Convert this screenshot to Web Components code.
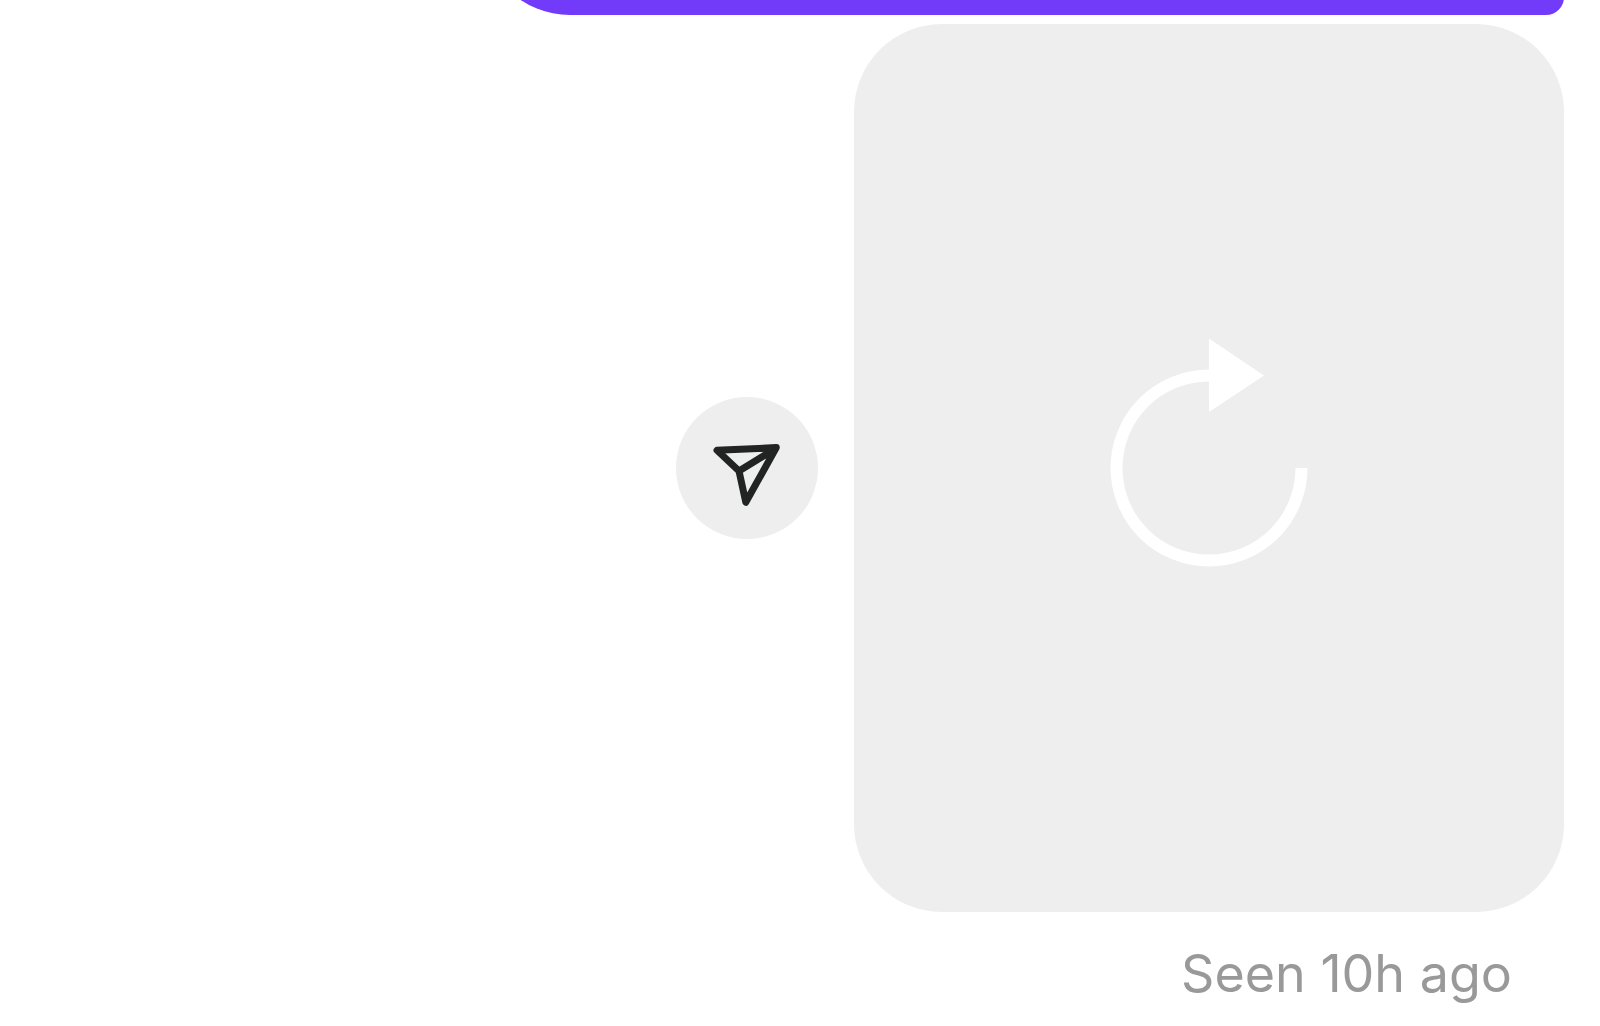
<!DOCTYPE html>
<html lang="en">
<head>
<meta charset="utf-8">
<meta name="viewport" content="width=device-width, initial-scale=1">
<title>Messages</title>
<style>
    body {
        margin: 0;
        background-color: #ffffff;
        color: #999999;
        font-family: Inter, "Liberation Sans", sans-serif;
    }
</style>
</head>
<body>
<chat-thread>
    <chat-bubble slot="previous"></chat-bubble>
    <chat-media>
        <share-button slot="action"></share-button>
    </chat-media>
    <chat-status slot="status">Seen 10h ago</chat-status>
</chat-thread>

<script>
class ChatThread extends HTMLElement {
    constructor() {
        super();
        this.attachShadow({mode: 'open'});
    }

    connectedCallback() {
        this.shadowRoot.innerHTML = `
            <style>
                :host {
                    display: block;
                }

                #main {
                    display: flex;
                    flex-direction: column;
                    padding-right: 36px;
                }

                /* only the tail of the previous message is scrolled into view */
                #previous {
                    display: flex;
                    justify-content: flex-end;
                    align-items: flex-end;
                    height: 15px;
                    margin-bottom: 9px;
                    overflow: hidden;
                }
            </style>
            <div id="main">
                <div id="previous"><slot name="previous"></slot></div>
                <slot></slot>
                <slot name="status"></slot>
            </div>
        `;
    }
}

class ChatBubble extends HTMLElement {
    constructor() {
        super();
        this.attachShadow({mode: 'open'});
    }

    connectedCallback() {
        this.shadowRoot.innerHTML = `
            <style>
                :host {
                    display: block;
                    flex: none;
                    width: 69.2%;
                }

                #main {
                    min-height: 240px;
                    border-radius: 88px 88px 18px 88px;
                    background-color: #713bf9;
                }
            </style>
            <div id="main"><slot></slot></div>
        `;
    }
}

class ChatMedia extends HTMLElement {
    constructor() {
        super();
        this.attachShadow({mode: 'open'});
    }

    connectedCallback() {
        this.shadowRoot.innerHTML = `
            <style>
                :host {
                    display: flex;
                    justify-content: flex-end;
                    align-items: center;
                    gap: 36px;
                }

                button {
                    display: flex;
                    justify-content: center;
                    align-items: center;
                    width: 45.4%;
                    aspect-ratio: 4 / 5;
                    padding: 0;
                    border: 0;
                    border-radius: 88px;
                    background-color: #eeeeee;
                    cursor: pointer;
                }

                svg {
                    display: block;
                    width: 260px;
                    height: 260px;
                }
            </style>
            <slot name="action"></slot>
            <button type="button" aria-label="Replay">
                <svg viewBox="0 0 260 260" aria-hidden="true">
                    <path d="M130 37.5A92.5 92.5 0 1 0 222.5 130" fill="none" stroke="#ffffff" stroke-width="12"/>
                    <path d="M130 0.5L185 37.5L130 74Z" fill="#ffffff"/>
                </svg>
            </button>
        `;
    }
}

class ShareButton extends HTMLElement {
    constructor() {
        super();
        this.attachShadow({mode: 'open'});
    }

    connectedCallback() {
        this.shadowRoot.innerHTML = `
            <style>
                :host {
                    display: block;
                    flex: none;
                }

                button {
                    display: block;
                    padding: 0;
                    border: 0;
                    border-radius: 50%;
                    background-color: #eeeeee;
                    cursor: pointer;
                }

                svg {
                    display: block;
                    width: 142px;
                    height: 142px;
                }
            </style>
            <button type="button" aria-label="Share">
                <svg viewBox="0 0 142 142" aria-hidden="true">
                    <path d="M41 53.3L100.3 50.6L69.8 105.3L63 74ZM63 74L99 52" fill="none" stroke="#222424" stroke-width="7" stroke-linejoin="round" stroke-linecap="round"/>
                </svg>
            </button>
        `;
    }
}

class ChatStatus extends HTMLElement {
    constructor() {
        super();
        this.attachShadow({mode: 'open'});
    }

    connectedCallback() {
        this.shadowRoot.innerHTML = `
            <style>
                :host {
                    display: block;
                    padding: 30px 52px 0 0;
                    font-size: 52px;
                    line-height: 64px;
                    text-align: right;
                }
            </style>
            <slot></slot>
        `;
    }
}

customElements.define('chat-thread', ChatThread);
customElements.define('chat-bubble', ChatBubble);
customElements.define('chat-media', ChatMedia);
customElements.define('share-button', ShareButton);
customElements.define('chat-status', ChatStatus);
</script>
</body>
</html>
